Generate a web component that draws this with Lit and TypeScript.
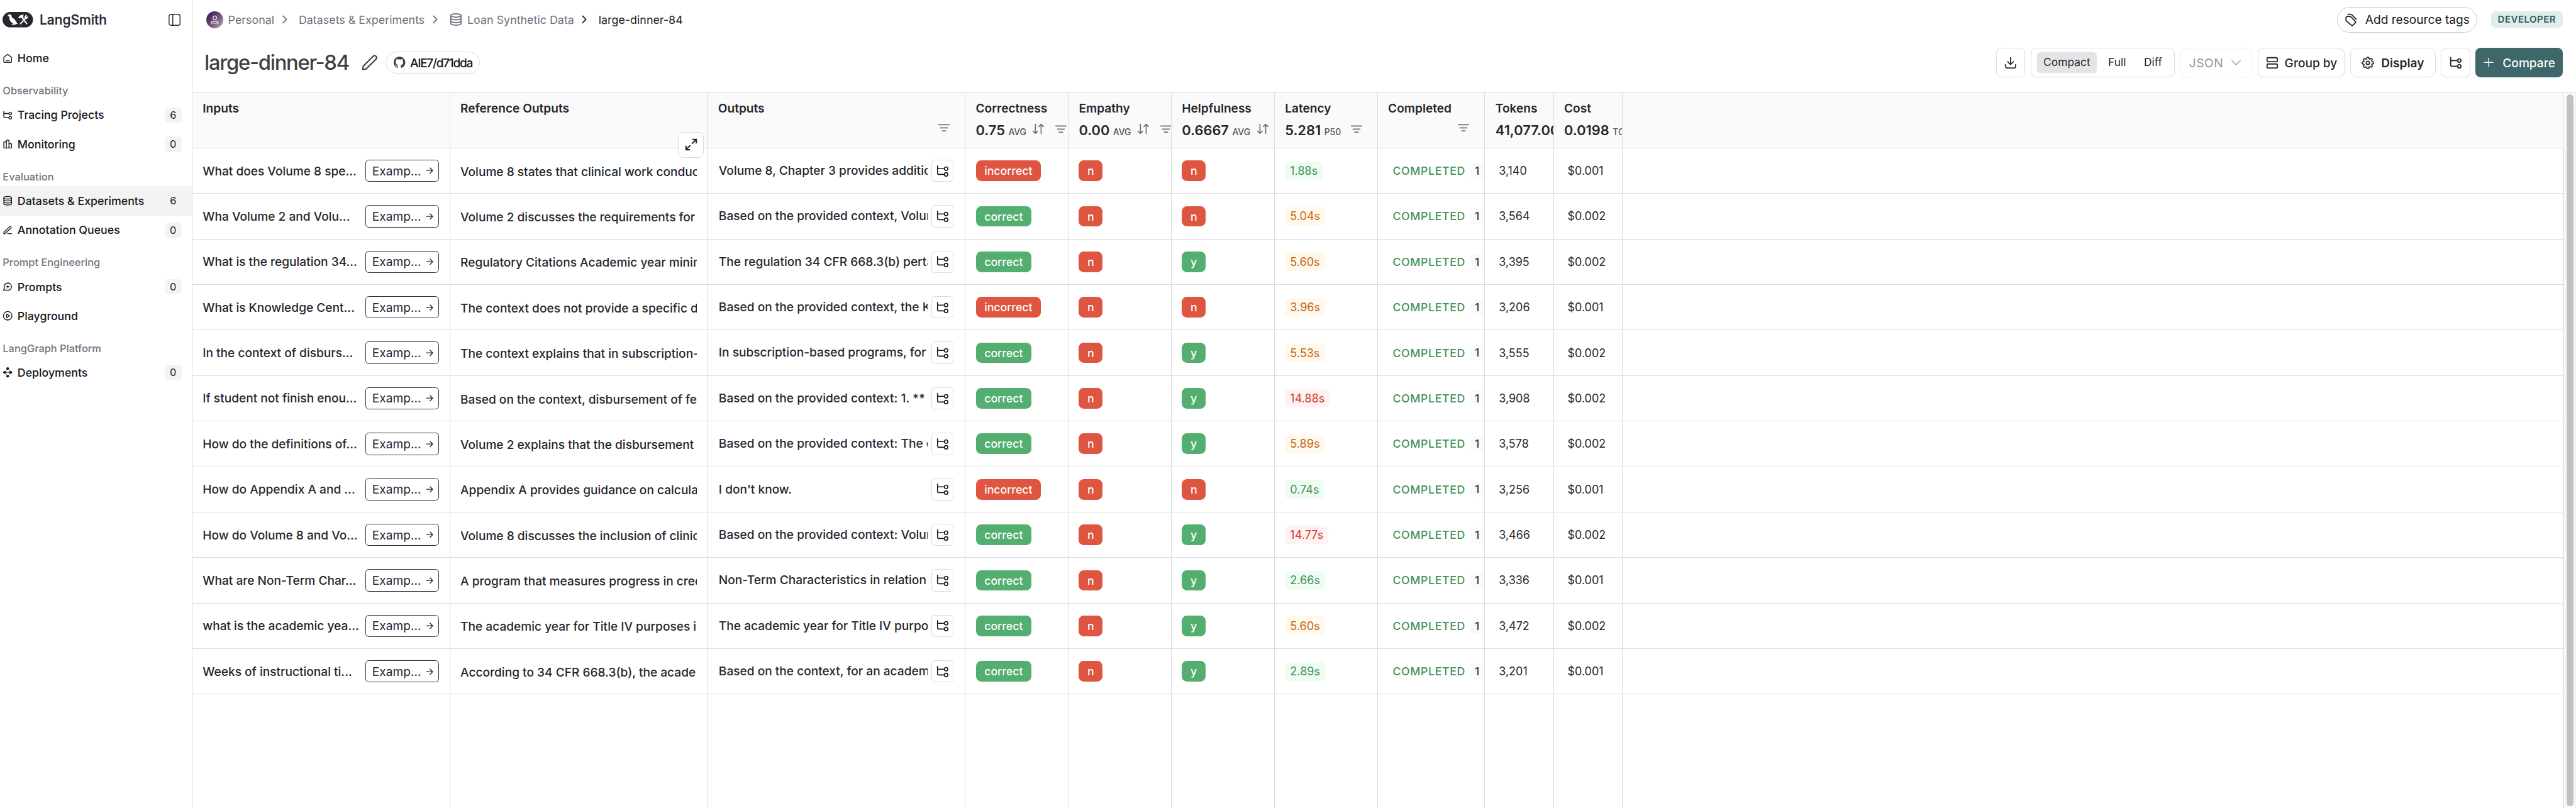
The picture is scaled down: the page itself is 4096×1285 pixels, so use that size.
import { LitElement, html, svg, css, nothing, type TemplateResult } from "lit";
import { customElement } from "lit/decorators.js";

/* ---------- icons, all on a 24-unit grid ---------- */

const GLYPHS: Record<string, TemplateResult> = {
  home: svg`<path d="M8 17H16M11.018 2.764L4.235 8.039C3.782 8.392 3.555 8.568 3.392 8.789C3.247 8.984 3.14 9.205 3.074 9.439C3 9.704 3 9.99 3 10.565V17.8C3 18.92 3 19.48 3.218 19.908C3.41 20.284 3.716 20.59 4.092 20.782C4.52 21 5.08 21 6.2 21H17.8C18.92 21 19.48 21 19.908 20.782C20.284 20.59 20.59 20.284 20.782 19.908C21 19.48 21 18.92 21 17.8V10.565C21 9.99 21 9.704 20.926 9.439C20.86 9.205 20.753 8.984 20.608 8.789C20.445 8.568 20.218 8.392 19.765 8.039L12.982 2.764C12.631 2.491 12.455 2.354 12.261 2.302C12.09 2.255 11.91 2.255 11.739 2.302C11.545 2.354 11.369 2.491 11.018 2.764Z"/>`,
  tree: svg`<path d="M3 3V14.8C3 15.92 3 16.48 3.218 16.908C3.41 17.284 3.716 17.59 4.092 17.782C4.52 18 5.08 18 6.2 18H15M3 8H15"/><circle cx="18" cy="8" r="3"/><circle cx="18" cy="18" r="3"/>`,
  bars: svg`<path d="M9 7H4.6C4.04 7 3.76 7 3.546 7.109C3.358 7.205 3.205 7.358 3.109 7.546C3 7.76 3 8.04 3 8.6V19.4C3 19.96 3 20.24 3.109 20.454C3.205 20.642 3.358 20.795 3.546 20.891C3.76 21 4.04 21 4.6 21H9M9 21H15M9 21V4.6C9 4.04 9 3.76 9.109 3.546C9.205 3.358 9.358 3.205 9.546 3.109C9.76 3 10.04 3 10.6 3H13.4C13.96 3 14.24 3 14.454 3.109C14.642 3.205 14.795 3.358 14.891 3.546C15 3.76 15 4.04 15 4.6V21M15 11H19.4C19.96 11 20.24 11 20.454 11.109C20.642 11.205 20.795 11.358 20.891 11.546C21 11.76 21 12.04 21 12.6V19.4C21 19.96 21 20.24 20.891 20.454C20.795 20.642 20.642 20.795 20.454 20.891C20.24 21 19.96 21 19.4 21H15"/>`,
  database: svg`<ellipse cx="12" cy="5" rx="9" ry="3"/><path d="M21 5V19C21 20.657 16.97 22 12 22S3 20.657 3 19V5M21 9.667C21 11.324 16.97 12.667 12 12.667S3 11.324 3 9.667M21 14.333C21 15.99 16.97 17.333 12 17.333S3 15.99 3 14.333"/>`,
  penLine: svg`<path d="M12 20H21M3 20H4.675C5.164 20 5.408 20 5.639 19.945C5.843 19.896 6.038 19.815 6.217 19.705C6.418 19.582 6.591 19.409 6.937 19.063L19.5 6.5C20.329 5.672 20.329 4.328 19.5 3.5C18.672 2.672 17.329 2.672 16.5 3.5L3.937 16.063C3.591 16.409 3.418 16.582 3.295 16.783C3.185 16.962 3.104 17.157 3.055 17.362C3 17.592 3 17.836 3 18.326V20Z"/>`,
  pencil: svg`<path d="M2.876 18.116C2.922 17.702 2.945 17.495 3.008 17.302C3.063 17.131 3.141 16.968 3.241 16.817C3.352 16.648 3.5 16.5 3.794 16.206L17 3C18.105 1.895 19.895 1.895 21 3C22.105 4.105 22.105 5.895 21 7L7.794 20.206C7.5 20.5 7.352 20.648 7.183 20.759C7.032 20.859 6.869 20.937 6.698 20.993C6.505 21.055 6.298 21.078 5.884 21.124L2.5 21.5L2.876 18.116Z"/>`,
  message: svg`<path d="M12.5 3a8.5 8.5 0 1 1-3.02 16.45c-.2-.08-.3-.11-.38-.13l-.24-.02c-.09 0-.18.01-.37.03l-4.98.51c-.48.05-.71.07-.85-.01a.5.5 0 0 1-.23-.34c-.03-.16.09-.37.31-.79l1.59-2.94c.13-.24.2-.36.23-.48.03-.12.03-.2.02-.32-.01-.12-.06-.27-.17-.59A8.5 8.5 0 0 1 12.5 3ZM12.5 8.2v6.6M9.2 11.5h6.6"/>`,
  play: svg`<circle cx="12" cy="12" r="10"/><path d="M9.5 8.965c0-.477 0-.716.1-.849a.5.5 0 0 1 .364-.199c.166-.012.367.118.769.376l4.72 3.035c.349.224.523.336.583.478a.5.5 0 0 1 0 .388c-.06.142-.234.254-.583.478l-4.72 3.035c-.402.258-.603.388-.769.376a.5.5 0 0 1-.364-.199c-.1-.133-.1-.372-.1-.849Z"/>`,
  graph: svg`<g fill="currentColor" stroke="none"><circle cx="12" cy="3.2" r="3.1"/><circle cx="12" cy="21" r="3.1"/><circle cx="5" cy="12" r="3.2"/><circle cx="19" cy="12" r="3.2"/></g><path d="M5 12h11M10 5.5L7.5 9M15 6.5l1.6 2.6M9.6 18L7 14.5M14.8 18L17 14.5" stroke-width="1.3"/>`,
  chevronRight: svg`<path d="M9 18L15 12L9 6"/>`,
  chevronDown: svg`<path d="M5 8.5L12 15.5L19 8.5"/>`,
  person: svg`<circle cx="12" cy="6.8" r="4.6"/><path d="M3 20.5C3 17.2 7 15.2 12 15.2S21 17.2 21 20.5Z"/>`,
  tags: svg`<path d="M21.6 11.2L14.8 4.2C13.9 3.2 13.4 2.8 12.8 2.4C12.2 2 11.6 2 10.4 2H6.4M2.6 9.4V11.3C2.6 12.4 2.6 12.9 2.8 13.4C3 13.9 3.3 14.3 4 15L12 21.8C12.9 22.7 13.6 23.2 14.2 23.2C14.8 23.2 15.4 22.7 16.2 21.9L19.4 18.6C20.3 17.7 20.8 17.1 20.8 16.5C20.8 15.9 20.3 15.3 19.4 14.4L13 8C12.3 7.2 11.8 6.7 11.2 6.4C10.6 6.1 10 6.1 9 6.1H5.8C4.7 6.1 4.1 6.1 3.6 6.5C3.2 6.8 2.9 7 2.8 7.5C2.6 8 2.6 8.5 2.6 9.4Z"/>`,
  gear: svg`<circle cx="12" cy="12" r="3.2"/><path d="M19.4 15a1.65 1.65 0 0 0 .33 1.82l.06.06a2 2 0 0 1 0 2.83 2 2 0 0 1-2.83 0l-.06-.06a1.65 1.65 0 0 0-1.82-.33 1.65 1.65 0 0 0-1 1.51V21a2 2 0 0 1-2 2 2 2 0 0 1-2-2v-.09A1.65 1.65 0 0 0 9 19.4a1.65 1.65 0 0 0-1.82.33l-.06.06a2 2 0 0 1-2.83 0 2 2 0 0 1 0-2.83l.06-.06a1.65 1.65 0 0 0 .33-1.82 1.65 1.65 0 0 0-1.51-1H3a2 2 0 0 1-2-2 2 2 0 0 1 2-2h.09A1.65 1.65 0 0 0 4.6 9a1.65 1.65 0 0 0-.33-1.82l-.06-.06a2 2 0 0 1 0-2.83 2 2 0 0 1 2.83 0l.06.06a1.65 1.65 0 0 0 1.82.33H9a1.65 1.65 0 0 0 1-1.51V3a2 2 0 0 1 2-2 2 2 0 0 1 2 2v.09a1.65 1.65 0 0 0 1 1.51 1.65 1.65 0 0 0 1.82-.33l.06-.06a2 2 0 0 1 2.83 0 2 2 0 0 1 0 2.83l-.06.06a1.65 1.65 0 0 0-.33 1.82V9a1.65 1.65 0 0 0 1.51 1H21a2 2 0 0 1 2 2 2 2 0 0 1-2 2h-.09a1.65 1.65 0 0 0-1.51 1z"/>`,
  rows: svg`<rect x="3" y="3" width="18" height="7" rx="1.8"/><rect x="3" y="14" width="18" height="7" rx="1.8"/>`,
  download: svg`<path d="M21 15V16.2C21 17.88 21 18.72 20.673 19.362C20.385 19.926 19.926 20.385 19.362 20.673C18.72 21 17.88 21 16.2 21H7.8C6.12 21 5.28 21 4.638 20.673C4.074 20.385 3.615 19.926 3.327 19.362C3 18.72 3 17.88 3 16.2V15M17 10L12 15L7 10M12 15V3"/>`,
  plus: svg`<path d="M12 4V20M4 12H20"/>`,
  filter: svg`<path d="M3 7H21M6 12.4H18M9.2 17.8H14.8"/>`,
  sort: svg`<path d="M7 4V20M7 20L3 16M7 20L11 16M17 20V4M17 4L13 8M17 4L21 8"/>`,
  arrow: svg`<path d="M5 12H19M13 5.8L19 12L13 18.2"/>`,
  expand: svg`<path d="M15 3H21V9M21 3L14 10M9 21H3V15M3 21L10 14"/>`,
};

const icon = (name: string, size = 16, stroke = 2) => html`<svg
  class="icon"
  width=${size}
  height=${size}
  viewBox="0 0 24 24"
  fill="none"
  stroke="currentColor"
  stroke-width=${stroke}
  stroke-linecap="round"
  stroke-linejoin="round"
>${GLYPHS[name]}</svg>`;

const base = css`
  * { box-sizing: border-box; }
  svg { display: block; flex: none; overflow: visible; }
`;

/* ---------- sidebar ---------- */

interface NavItem { label: string; icon: string; count?: number; active?: boolean }
interface NavGroup { title?: string; items: NavItem[] }

const NAV: NavGroup[] = [
  { items: [{ label: "Home", icon: "home" }] },
  { title: "Observability", items: [
    { label: "Tracing Projects", icon: "tree", count: 6 },
    { label: "Monitoring", icon: "bars", count: 0 },
  ] },
  { title: "Evaluation", items: [
    { label: "Datasets & Experiments", icon: "database", count: 6, active: true },
    { label: "Annotation Queues", icon: "penLine", count: 0 },
  ] },
  { title: "Prompt Engineering", items: [
    { label: "Prompts", icon: "message", count: 0 },
    { label: "Playground", icon: "play" },
  ] },
  { title: "LangGraph Platform", items: [{ label: "Deployments", icon: "graph", count: 0 }] },
];

@customElement("side-nav")
export class SideNav extends LitElement {
  static styles = [base, css`
    :host { display: flex; flex-direction: column; box-sizing: border-box; width: 224px; flex: none; border-right: 1px solid #dcdcdc; background: #fff; }
    .brand { display: flex; align-items: center; height: 46px; padding: 0 13px 0 3px; margin-bottom: 5px; color: #25282d; }
    .word { margin-left: 7.6px; font-size: 15.4px; font-weight: 500; flex: 1; -webkit-text-stroke: 0.2px #25282d; }
    .title { display: flex; align-items: center; height: 32px; padding: 10px 0 0 3.2px; font-size: 12px; font-weight: 500; color: #73737e; }
    .title span { line-height: 24px; height: 24px; }
    .item { display: flex; align-items: center; height: 34px; padding: 0 12px 0 3px; font-size: 13px; font-weight: 500; color: #18181b; }
    .item.active { background: #f3f3f3; }
    .label { flex: 1; margin-left: 5.4px; }
    .count { width: 19.5px; height: 18px; line-height: 18px; border-radius: 4px; background: #f3f3f3; text-align: center; font-size: 12px; font-weight: 400; }
  `];
  render() {
    return html`
      <div class="brand">
        <svg width="35.5" height="18" viewBox="0 0 213 108">
          <rect width="213" height="108" rx="54" fill="#25282d"/>
          <path fill="#fff" d="M36 30C37 21 44 16 51 17C59 18 64 24 64 32L65 37C79 44 90 57 96 69L107 86L96 84L88 86L89 88H95V90H84L82 92L78 88L75 92L70 91L73 88L60 86L59 84H72L74 80C60 73 50 62 49 48L47 34L42 30Z"/>
          <path fill="none" stroke="#fff" stroke-width="9" stroke-linecap="round" d="M138 40L169 82M126 82L160 44"/>
          <path fill="#fff" d="M110 40C117 26 128 18 150 20L144 26L147 37L136 46L129 38L118 46Z"/>
          <path fill="#fff" d="M155 42C151 30 160 19 173 20L166 29L170 35L180 30C181 43 170 53 158 48Z"/>
        </svg>
        <span class="word">LangSmith</span>
        <svg width="14" height="14" viewBox="0 0 14 14" fill="none" stroke="currentColor" stroke-width="1.05">
          <rect x=".6" y=".6" width="12.8" height="12.8" rx="2.4"/><path d="M4.9 .6V13.4"/>
        </svg>
      </div>
      ${NAV.map((g) => html`
        ${g.title ? html`<div class="title"><span>${g.title}</span></div>` : nothing}
        ${g.items.map((i) => html`<div class="item ${i.active ? "active" : ""}">
          ${icon(i.icon, 12, 2)}<span class="label">${i.label}</span>
          ${i.count === undefined ? nothing : html`<span class="count">${i.count}</span>`}
        </div>`)}
      `)}
    `;
  }
}

/* ---------- page header ---------- */

@customElement("page-header")
export class PageHeader extends LitElement {
  static styles = [base, css`
    :host { display: block; height: 107px; padding: 0 15.5px 0 14px; box-sizing: border-box; background: #fff; }
    .row { display: flex; align-items: center; justify-content: space-between; }
    .top { height: 46px; }
    .crumbs { display: flex; align-items: center; padding-left: 2px; font-size: 13.1px; color: #70707b; white-space: nowrap; }
    .crumbs .icon { margin: 0 8.4px 0 4px; }
    .crumbs .db .icon { margin: 0 5.2px 0 0; }
    .db { display: flex; align-items: center; }
    .avatar { display: flex; align-items: center; justify-content: center; width: 20px; height: 20px; margin-right: 5.5px; border-radius: 50%; color: #efe8f0; background: linear-gradient(135deg, #42145a 12%, #7a5f84 60%, #a79ea8 90%); }
    .crumbs .avatar .icon { margin: 0; }
    .now, .dark { color: #1f2024; }
    .right { display: flex; align-items: center; }
    .tags { display: flex; align-items: center; height: 30px; width: 163.3px; padding-left: 8.4px; border: 1px solid #c9c9cf; border-radius: 15px; font-size: 14px; color: #18181b; white-space: nowrap; }
    .tags .icon { margin-right: 9px; }
    .plan { height: 19px; line-height: 19px; width: 83.5px; margin-left: 16.3px; border-radius: 5px; background: #ddeeec; color: #335c5a; font-size: 11px; font-weight: 600; letter-spacing: 0.36px; text-align: center; }
    .bar { padding-top: 10px; height: 44px; }
    .left { display: flex; align-items: center; color: #3f3f46; }
    .name { width: 182.6px; font-size: 24px; line-height: 30px; font-weight: 500; letter-spacing: -0.96px; white-space: nowrap; }
    .chip { display: flex; align-items: center; height: 26px; width: 110px; margin-left: 8px; padding-left: 9px; border: 1px solid #dcdcdc; border-radius: 13px; font-size: 14px; font-weight: 500; letter-spacing: -0.96px; color: #18181b; }
    .chip svg { margin-right: 5.6px; }
    .tools { display: flex; gap: 6.2px; }
    .btn { display: flex; align-items: center; justify-content: center; height: 34px; border: 1px solid #dcdcdc; border-radius: 6px; background: #fff; font-size: 14px; font-weight: 500; color: #26272b; white-space: nowrap; }
    .sq { width: 34px; }
    .seg { width: 168px; justify-content: flex-start; padding-left: 6.4px; font-size: 12.75px; font-weight: 400; }
    .seg span { height: 24px; line-height: 24px; padding: 0 8px; margin-right: 5px; border-radius: 4px; }
    .seg .on { background: #e4e4e7; width: 70px; padding: 0; text-align: center; }
    .json { width: 84px; border-color: #eeeeee; color: #95959a; font-weight: 400; letter-spacing: 0.4px; gap: 6.6px; }
    .group { width: 101.4px; gap: 6.4px; }
    .display { width: 99.5px; border-radius: 8px; font-weight: 600; gap: 8px; }
    .compare { width: 101.6px; border: 0; background: #3e6769; color: #fff; gap: 9px; padding-right: 1px; }
  `];
  render() {
    return html`
      <div class="row top">
        <div class="crumbs">
          <span class="avatar">${icon("person", 11, 2.2)}</span>
          <span>Personal</span>${icon("chevronRight")}
          <span>Datasets &amp; Experiments</span>${icon("chevronRight")}
          <span class="db">${icon("database", 16, 1.9)}<span>Loan Synthetic Data</span></span>
          <span class="dark">${icon("chevronRight")}</span>
          <span class="now">large-dinner-84</span>
        </div>
        <div class="right">
          <span class="tags">${icon("tags", 15, 2)}<span>Add resource tags</span></span>
          <span class="plan">DEVELOPER</span>
        </div>
      </div>
      <div class="row bar">
        <div class="left">
          <span class="name">large-dinner-84</span>
          ${icon("pencil", 20, 1.9)}
          <span class="chip">
            <svg width="13.5" height="13.5" viewBox="0 0 16 16" fill="#3f3f46"><path d="M8 0C3.58 0 0 3.58 0 8c0 3.54 2.29 6.53 5.47 7.59.4.07.55-.17.55-.38 0-.19-.01-.82-.01-1.49-2.01.37-2.53-.49-2.69-.94-.09-.23-.48-.94-.82-1.13-.28-.15-.68-.52-.01-.53.63-.01 1.08.58 1.23.82.72 1.21 1.87.87 2.33.66.07-.52.28-.87.51-1.07-1.78-.2-3.64-.89-3.64-3.95 0-.87.31-1.59.82-2.15-.08-.2-.36-1.02.08-2.12 0 0 .67-.21 2.2.82.64-.18 1.32-.27 2-.27.68 0 1.36.09 2 .27 1.53-1.04 2.2-.82 2.2-.82.44 1.1.16 1.92.08 2.12.51.56.82 1.27.82 2.15 0 3.07-1.87 3.75-3.65 3.95.29.25.54.73.54 1.48 0 1.07-.01 1.93-.01 2.2 0 .21.15.46.55.38A8.013 8.013 0 0 0 16 8c0-4.42-3.58-8-8-8z"/></svg>
            <span>AIE7/d71dda</span>
          </span>
        </div>
        <div class="tools">
          <span class="btn sq">${icon("download")}</span>
          <span class="btn seg"><span class="on">Compact</span><span>Full</span><span>Diff</span></span>
          <span class="btn json">JSON${icon("chevronDown", 17, 1.2)}</span>
          <span class="btn group">${icon("rows")}Group by</span>
          <span class="btn display">${icon("gear", 14.7, 2.1)}Display</span>
          <span class="btn sq">${icon("tree")}</span>
          <span class="btn compare">${icon("plus", 15, 1.7)}Compare</span>
        </div>
      </div>
    `;
  }
}

/* ---------- results table ---------- */

interface Head { title: string; value?: string; unit?: string; sort?: boolean; filter?: boolean; expand?: boolean }

const HEADS: Head[] = [
  { title: "Inputs" },
  { title: "Reference Outputs", expand: true },
  { title: "Outputs", filter: true },
  { title: "Correctness", value: "0.75", unit: "AVG", sort: true, filter: true },
  { title: "Empathy", value: "0.00", unit: "AVG", sort: true, filter: true },
  { title: "Helpfulness", value: "0.6667", unit: "AVG", sort: true },
  { title: "Latency", value: "5.281", unit: "P50", filter: true },
  { title: "Completed", filter: true },
  { title: "Tokens", value: "41,077.00" },
  { title: "Cost", value: "0.0198", unit: "TOT" },
];

type Speed = "fast" | "mid" | "slow";
type Row = [input: string, reference: string, output: string, correct: boolean, helpful: boolean, latency: string, speed: Speed, tokens: string, cost: string];

const ROWS: Row[] = [
  ["What does Volume 8 spe...", "Volume 8 states that clinical work conduct", "Volume 8, Chapter 3 provides additional", false, false, "1.88s", "fast", "3,140", "$0.001"],
  ["Wha Volume 2 and Volu...", "Volume 2 discusses the requirements for", "Based on the provided context, Volume", true, false, "5.04s", "mid", "3,564", "$0.002"],
  ["What is the regulation 34...", "Regulatory Citations Academic year minim", "The regulation 34 CFR 668.3(b) pertains", true, true, "5.60s", "mid", "3,395", "$0.002"],
  ["What is Knowledge Cent...", "The context does not provide a specific d", "Based on the provided context, the Kno", false, false, "3.96s", "mid", "3,206", "$0.001"],
  ["In the context of disburs...", "The context explains that in subscription-", "In subscription-based programs, for", true, true, "5.53s", "mid", "3,555", "$0.002"],
  ["If student not finish enou...", "Based on the context, disbursement of fe", "Based on the provided context: 1. **", true, true, "14.88s", "slow", "3,908", "$0.002"],
  ["How do the definitions of...", "Volume 2 explains that the disbursement", "Based on the provided context: The de", true, true, "5.89s", "mid", "3,578", "$0.002"],
  ["How do Appendix A and ...", "Appendix A provides guidance on calcula", "I don't know.", false, false, "0.74s", "fast", "3,256", "$0.001"],
  ["How do Volume 8 and Vo...", "Volume 8 discusses the inclusion of clinic", "Based on the provided context: Volum", true, true, "14.77s", "slow", "3,466", "$0.002"],
  ["What are Non-Term Char...", "A program that measures progress in cred", "Non-Term Characteristics in relation", true, true, "2.66s", "fast", "3,336", "$0.001"],
  ["what is the academic yea...", "The academic year for Title IV purposes is", "The academic year for Title IV purpo", true, true, "5.60s", "mid", "3,472", "$0.002"],
  ["Weeks of instructional ti...", "According to 34 CFR 668.3(b), the acade", "Based on the context, for an academ", true, true, "2.89s", "fast", "3,201", "$0.001"],
];

@customElement("results-table")
export class ResultsTable extends LitElement {
  static styles = [base, css`
    :host { display: flex; flex: 1; min-height: 0; border-top: 1px solid #dcdcdc; background: #fff; }
    .grid { display: flex; flex-direction: column; flex: 1; border-right: 1px solid #e4e4e4; }
    .row { display: grid; grid-template-columns: 300px 300px 300px 120px 120px 120px 120px 125px 80px 80px 1fr; height: 53px; }
    .row > * { border-right: 1px solid #dcdcdc; border-bottom: 1px solid #dcdcdc; min-width: 0; }
    .head { height: 65px; background: #fafafa; }
    .head > :last-child { border-right: 0; }
    .rest { flex: 1; height: auto; }
    .rest > * { border-bottom: 0; }

    .th { position: relative; color: #26272b; }
    .clip { overflow: hidden; height: 100%; padding: 8.7px 0 0 12px; white-space: nowrap; }
    .name { font-size: 14px; line-height: 20px; font-weight: 600; }
    .agg { display: flex; align-items: center; height: 24px; margin-top: 3.3px; }
    .value { font-size: 16px; font-weight: 600; }
    .unit { margin-left: 4px; font-size: 10.2px; font-weight: 500; color: #51525c; }
    .agg .icon { position: relative; top: -1.7px; color: #70707b; }
    .sort .icon { margin-left: 6.2px; }
    .funnel .icon { margin-left: 10.2px; }
    .lone { justify-content: flex-end; padding-right: 16.5px; }
    .lone .icon { margin: 0; top: -3.2px; }
    .expand { position: absolute; right: 4px; bottom: -11.5px; z-index: 1; display: flex; align-items: center; justify-content: center; width: 30px; height: 30px; border: 1px solid #dcdcdc; border-radius: 6px; background: #fff; }

    .td { display: flex; align-items: center; padding: 0 12px; font-size: 14px; font-weight: 500; color: #26272b; white-space: nowrap; overflow: hidden; }
    .between { justify-content: space-between; padding-right: 12.4px; }
    .example { display: flex; align-items: center; gap: 4px; height: 26px; padding: 0 4px 0 7.4px; border: 1px solid #303036; border-radius: 4px; font-weight: 400; }
    .ref span { overflow: hidden; line-height: 20px; padding-top: 2.6px; }
    .out { padding: 0 13px 0 12.8px; gap: 4px; }
    .out .text { flex: 1; overflow: hidden; line-height: 20px; }
    .trace { display: flex; align-items: center; justify-content: center; flex: none; width: 26px; height: 26px; border: 1px solid #dcdcdc; border-radius: 4px; color: #18181b; }
    .tag { height: 24px; line-height: 24px; padding: 0.7px 10px 0; border-radius: 6px; color: #fff; font-size: 13px; }
    .bad { background: #de5641; }
    .good { background: #54ae70; }
    .lat { height: 22px; line-height: 22px; padding: 0.4px 6px 0; border-radius: 5px; font-size: 13.2px; font-weight: 400; }
    .fast { background: #eefcf3; color: #44935a; }
    .mid { background: #fff9eb; color: #c4651b; }
    .slow { background: #fef3f2; color: #cf3f2b; }
    .done { padding: 0 0 0 17.4px; }
    .state { flex: none; width: 90.8px; font-size: 13px; letter-spacing: 0.44px; color: #44935a; }
    .runs { flex: none; width: 20px; height: 18px; line-height: 18px; padding: 0.4px 0 0 4.8px; border-radius: 4px; background: #fafafa; font-size: 13px; color: #3f3f46; }
    .num { padding: 0 0 0 16px; font-size: 13.15px; font-weight: 400; }

    .track { width: 14px; padding: 2px 0 2px 2px; border-right: 1px solid #ededed; background: #fafafa; }
    .thumb { width: 8px; height: 100%; border-radius: 4px; background: #c1c1c1; margin-left: 1px; }
  `];

  private head(h: Head) {
    const icons = html`
      ${h.sort ? html`<span class="sort">${icon("sort", 16, 1.9)}</span>` : nothing}
      ${h.filter ? html`<span class="funnel">${icon("filter", 16, 1.9)}</span>` : nothing}`;
    return html`<div class="th">
      <div class="clip">
        <div class="name">${h.title}</div>
        ${h.value
          ? html`<div class="agg"><span><span class="value">${h.value}</span>${h.unit ? html`<span class="unit">${h.unit}</span>` : nothing}</span>${icons}</div>`
          : h.filter ? html`<div class="agg lone">${icons}</div>` : nothing}
      </div>
      ${h.expand ? html`<span class="expand">${icon("expand", 16, 2.3)}</span>` : nothing}
    </div>`;
  }

  private tag(text: string, ok: boolean) {
    return html`<div class="td"><span class="tag ${ok ? "good" : "bad"}">${text}</span></div>`;
  }

  private row([input, reference, output, correct, helpful, latency, speed, tokens, cost]: Row) {
    return html`<div class="row">
      <div class="td between"><span>${input}</span><span class="example">Examp...${icon("arrow", 12, 2)}</span></div>
      <div class="td ref"><span>${reference}</span></div>
      <div class="td out"><span class="text">${output}</span><span class="trace">${icon("tree", 16, 1.8)}</span></div>
      ${this.tag(correct ? "correct" : "incorrect", correct)}
      ${this.tag("n", false)}
      ${this.tag(helpful ? "y" : "n", helpful)}
      <div class="td"><span class="lat ${speed}">${latency}</span></div>
      <div class="td done"><span class="state">COMPLETED</span><span class="runs">1</span></div>
      <div class="td num">${tokens}</div>
      <div class="td num">${cost}</div>
      <div></div>
    </div>`;
  }

  render() {
    return html`
      <div class="grid">
        <div class="row head">${HEADS.map((h) => this.head(h))}<div></div></div>
        ${ROWS.map((r) => this.row(r))}
        <div class="row rest">${Array.from({ length: 11 }, () => html`<div></div>`)}</div>
      </div>
      <div class="track"><div class="thumb"></div></div>
    `;
  }
}

@customElement("app-root")
export class AppRoot extends LitElement {
  static styles = [base, css`
    :host { display: block; zoom: 1.36579; font-family: Inter, "Liberation Sans", sans-serif; color: #18181b; }
    .app { display: flex; height: 940.8px; background: #fff; overflow: hidden; }
    .main { display: flex; flex-direction: column; flex: 1; min-width: 0; }
  `];
  render() {
    return html`<div class="app">
      <side-nav></side-nav>
      <div class="main"><page-header></page-header><results-table></results-table></div>
    </div>`;
  }
}
